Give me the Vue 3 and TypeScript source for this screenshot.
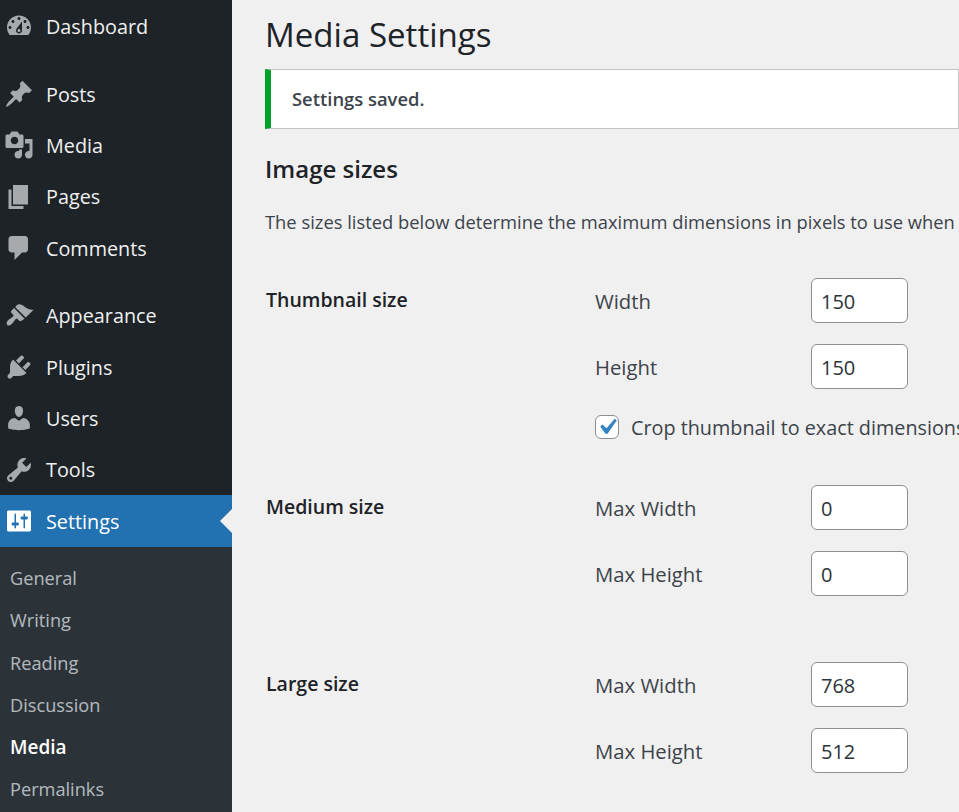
<script setup lang="ts">
interface MenuItem {
  label: string
  icon: string
  current?: boolean
}

const icons: Record<string, string> = {
  dashboard: 'M3.76 16h12.48c1.1-1.37 1.76-3.11 1.76-5 0-4.42-3.58-8-8-8s-8 3.58-8 8c0 1.89.66 3.63 1.76 5zM10 4c.55 0 1 .45 1 1s-.45 1-1 1-1-.45-1-1 .45-1 1-1zM6 6c.55 0 1 .45 1 1s-.45 1-1 1-1-.45-1-1 .45-1 1-1zm8 0c.55 0 1 .45 1 1s-.45 1-1 1-1-.45-1-1 .45-1 1-1zm-5.37 5.55L12 7v6c0 1.1-.9 2-2 2s-2-.9-2-2c0-.57.24-1.08.63-1.45zM4 10c.55 0 1 .45 1 1s-.45 1-1 1-1-.45-1-1 .45-1 1-1zm12 0c.55 0 1 .45 1 1s-.45 1-1 1-1-.45-1-1 .45-1 1-1zm-5 3c0-.55-.45-1-1-1s-1 .45-1 1 .45 1 1 1 1-.45 1-1z',
  posts: 'M10.44 3.02l1.82-1.82 6.36 6.35-1.83 1.82c-1.05-.68-2.48-.57-3.41.36l-.75.75c-.92.93-1.04 2.35-.35 3.41l-1.83 1.82-2.41-2.41-2.8 2.79c-.42.42-3.38 2.71-3.8 2.29s1.86-3.39 2.28-3.81l2.79-2.79L4.1 9.36l1.83-1.82c1.05.69 2.48.57 3.4-.36l.75-.75c.93-.92 1.05-2.35.36-3.41z',
  media: 'M13 11V4c0-.55-.45-1-1-1h-1.67L9 1H5L3.67 3H2c-.55 0-1 .45-1 1v7c0 .55.45 1 1 1h10c.55 0 1-.45 1-1zM7 4.5c1.38 0 2.5 1.12 2.5 2.5S8.38 9.5 7 9.5 4.5 8.38 4.5 7 5.62 4.5 7 4.5zM14 6h5v10.5c0 1.38-1.12 2.5-2.5 2.5S14 17.88 14 16.5s1.12-2.5 2.5-2.5c.17 0 .34.02.5.05V9h-3V6zm-4 8.05V13h2v3.5c0 1.38-1.12 2.5-2.5 2.5S7 17.88 7 16.5 8.12 14 9.5 14c.17 0 .34.02.5.05z',
  pages: 'M6 15V2h10v13H6zm-1 1h8v2H3V5h2v11z',
  comments: 'M5 2h9c1.1 0 2 .9 2 2v7c0 1.1-.9 2-2 2h-2l-5 5v-5H5c-1.1 0-2-.9-2-2V4c0-1.1.9-2 2-2z',
  appearance: 'M14.48 11.06L7.41 3.99l1.5-1.5c.5-.56 2.3-.47 3.51.32 1.21.8 1.43 1.28 2.91 2.1 1.18.64 2.45 1.26 4.45.85zm-.71.71L6.7 4.7 4.93 6.47c-.39.39-.39 1.02 0 1.41l1.06 1.06c.39.39.39 1.03 0 1.42-.6.6-1.43 1.11-2.21 1.69-.35.26-.7.53-1.01.84-.88.88-1.41 2.27-.63 3.05.78.78 2.17.25 3.05-.63.31-.31.58-.66.84-1.01.58-.78 1.09-1.61 1.69-2.21.39-.39 1.03-.39 1.42 0l1.06 1.06c.39.39 1.02.39 1.41 0z',
  plugins: 'M13.11 4.36L9.87 7.6 8 5.73l3.24-3.24c.35-.34 1.05-.2 1.56.32.52.51.66 1.21.31 1.55zm-8 1.77l.91-1.12 9.01 9.01-1.19.84c-.71.71-2.63 1.16-3.82 1.16H6.14L4.9 17.26c-.59.59-1.54.59-2.12 0-.59-.58-.59-1.53 0-2.12l1.24-1.24v-3.88c0-1.13.4-3.19 1.09-3.89zm7.26 3.97l3.24-3.24c.34-.35 1.04-.21 1.55.31.52.51.66 1.21.31 1.55l-3.24 3.25z',
  users: 'M10 9.25c-2.27 0-2.73-3.44-2.73-3.44C7 4.02 7.82 2 9.97 2c2.16 0 2.98 2.02 2.71 3.81 0 0-.41 3.44-2.68 3.44zm0 2.57L12.72 10c2.39 0 4.52 2.33 4.52 4.53v2.49s-3.65 1.13-7.24 1.13c-3.65 0-7.24-1.13-7.24-1.13v-2.49c0-2.25 1.94-4.48 4.47-4.48z',
  tools: 'M16.68 9.77c-1.34 1.34-3.3 1.67-4.95.99l-5.41 6.52c-.99.99-2.59.99-3.58 0s-.99-2.59 0-3.57l6.52-5.42c-.68-1.65-.35-3.61.99-4.95 1.28-1.28 3.12-1.62 4.72-1.06l-2.89 2.89 2.82 2.82 2.86-2.87c.53 1.58.18 3.39-1.08 4.65zM3.81 16.21c.4.39 1.04.39 1.43 0 .4-.4.4-1.04 0-1.43-.39-.4-1.03-.4-1.43 0-.39.39-.39 1.03 0 1.43z',
  settings: 'M18 16V4c0-.55-.45-1-1-1H3c-.55 0-1 .45-1 1v12c0 .55.45 1 1 1h14c.55 0 1-.45 1-1zM8 11h1c.55 0 1 .45 1 1s-.45 1-1 1H8v1.5c0 .28-.22.5-.5.5s-.5-.22-.5-.5V13H6c-.55 0-1-.45-1-1s.45-1 1-1h1V5.5c0-.28.22-.5.5-.5s.5.22.5.5V11zm5-2h-1c-.55 0-1-.45-1-1s.45-1 1-1h1V5.5c0-.28.22-.5.5-.5s.5.22.5.5V7h1c.55 0 1 .45 1 1s-.45 1-1 1h-1v5.5c0 .28-.22.5-.5.5s-.5-.22-.5-.5V9z'
}

const menuGroups: MenuItem[][] = [
  [{ label: 'Dashboard', icon: 'dashboard' }],
  [
    { label: 'Posts', icon: 'posts' },
    { label: 'Media', icon: 'media' },
    { label: 'Pages', icon: 'pages' },
    { label: 'Comments', icon: 'comments' }
  ],
  [
    { label: 'Appearance', icon: 'appearance' },
    { label: 'Plugins', icon: 'plugins' },
    { label: 'Users', icon: 'users' },
    { label: 'Tools', icon: 'tools' },
    { label: 'Settings', icon: 'settings', current: true }
  ]
]

const submenu = ['General', 'Writing', 'Reading', 'Discussion', 'Media', 'Permalinks']

const sizes = [
  {
    title: 'Thumbnail size',
    fields: [
      { label: 'Width', value: '150' },
      { label: 'Height', value: '150' }
    ],
    crop: true
  },
  {
    title: 'Medium size',
    fields: [
      { label: 'Max Width', value: '0' },
      { label: 'Max Height', value: '0' }
    ],
    crop: false
  },
  {
    title: 'Large size',
    fields: [
      { label: 'Max Width', value: '768' },
      { label: 'Max Height', value: '512' }
    ],
    crop: false
  }
]
</script>

<template>
  <div class="page">
    <aside class="sidebar">
      <ul v-for="(group, i) in menuGroups" :key="i" class="menu-group">
        <li v-for="item in group" :key="item.label" class="menu-item" :class="{ current: item.current }">
          <svg class="menu-icon" viewBox="0 0 20 20" aria-hidden="true">
            <path :d="icons[item.icon]" fill-rule="evenodd" />
          </svg>
          <span>{{ item.label }}</span>
        </li>
      </ul>
      <ul class="submenu">
        <li v-for="name in submenu" :key="name" :class="{ active: name === 'Media' }">{{ name }}</li>
      </ul>
    </aside>

    <main class="content">
      <h1>Media Settings</h1>
      <div class="notice"><strong>Settings saved.</strong></div>
      <h2>Image sizes</h2>
      <p class="intro">The sizes listed below determine the maximum dimensions in pixels to use when adding an image to the Media Library.</p>

      <section v-for="size in sizes" :key="size.title" class="size-row" :class="{ cropped: size.crop }">
        <h3>{{ size.title }}</h3>
        <div class="size-fields">
          <label v-for="field in size.fields" :key="field.label" class="field">
            <span>{{ field.label }}</span>
            <input type="text" :value="field.value" />
          </label>
          <label v-if="size.crop" class="crop">
            <span class="checkbox">
              <svg viewBox="0 0 20 20" aria-hidden="true">
                <path d="M14.83 4.89l1.34.94-5.81 8.38H9.02L5.78 9.67l1.34-1.25 2.57 2.4z" />
              </svg>
            </span>
            <span class="crop-text">Crop thumbnail to exact dimensions (normally thumbnails are proportional)</span>
          </label>
        </div>
      </section>
    </main>
  </div>
</template>

<style>
html,
body {
  margin: 0;
  overflow: hidden;
  background: #f0f0f1;
}
</style>

<style scoped>
.page {
  display: flex;
  height: 812px;
  overflow: hidden;
  font-family: "Open Sans", "Liberation Sans", sans-serif;
  color: #3c434a;
}

.sidebar {
  flex: none;
  width: 232px;
  height: 812px;
  overflow: hidden;
  background: #1d2327;
  padding-top: 0.7px;
  box-sizing: border-box;
}

ul {
  list-style: none;
  margin: 0;
  padding: 0;
}

.menu-group {
  margin-bottom: 16.5px;
}

.menu-group:nth-of-type(3) {
  margin-bottom: 0;
}

.menu-item {
  position: relative;
  display: flex;
  align-items: center;
  height: 51.3px;
  padding-left: 4px;
  font-size: 19.8px;
  color: #f0f0f1;
}

.menu-icon {
  flex: none;
  width: 30px;
  height: 30px;
  margin-right: 12px;
  fill: #a7aaad;
}

.menu-item.current {
  background: #2271b1;
  color: #fff;
}

.menu-item.current .menu-icon {
  fill: #fff;
}

.menu-item.current::after {
  content: "";
  position: absolute;
  right: 0;
  top: 50%;
  margin-top: -12px;
  border: 12px solid transparent;
  border-right-color: #f0f0f1;
}

.submenu {
  background: #2c3338;
  padding-top: 10.6px;
  height: 300px;
}

.submenu li {
  height: 42.2px;
  line-height: 42.2px;
  padding-left: 10px;
  font-size: 18.2px;
  color: rgba(240, 246, 252, 0.7);
}

.submenu li.active {
  color: #fff;
  font-size: 19px;
  font-weight: 600;
}

.content {
  flex: 1;
  min-width: 0;
  padding-left: 33px;
  overflow: hidden;
}

h1 {
  margin: 0;
  padding-top: 11px;
  height: 69px;
  box-sizing: border-box;
  font-size: 33.1px;
  line-height: 47px;
  font-weight: 400;
  color: #1d2327;
}

.notice {
  display: flex;
  align-items: center;
  height: 60px;
  box-sizing: border-box;
  background: #fff;
  border: 1px solid #c3c4c7;
  border-left: 6px solid #00a32a;
  padding: 0 0 2px 21px;
  font-size: 18.4px;
}

.notice strong {
  font-weight: 600;
}

h2 {
  margin: 22px 0 0;
  font-size: 24px;
  line-height: 36px;
  font-weight: 600;
  color: #1d2327;
}

.intro {
  margin: 20px 0 0;
  font-size: 18.35px;
  line-height: 30px;
  white-space: nowrap;
}

.size-row {
  display: flex;
  margin-top: 66px;
}

.size-row.cropped {
  margin-top: 41px;
}

.size-row.cropped + .size-row {
  margin-top: 44px;
}

h3 {
  flex: none;
  width: 330px;
  margin: 0;
  padding: 7px 0 0 1px;
  box-sizing: border-box;
  font-size: 19.5px;
  line-height: 30px;
  font-weight: 600;
  color: #1d2327;
}

.size-fields {
  display: flex;
  flex-direction: column;
  gap: 21px;
  min-width: 0;
}

.field {
  display: flex;
  align-items: center;
  font-size: 20.3px;
}

.field span {
  width: 216px;
  padding-top: 1px;
}

.field input {
  width: 97px;
  height: 45px;
  box-sizing: border-box;
  border: 1px solid #8c8f94;
  border-radius: 6px;
  background: #fff;
  padding: 2px 9px 0;
  font: inherit;
  font-size: 20px;
  color: #2c3338;
  outline: none;
}

.crop {
  display: flex;
  align-items: center;
  gap: 12px;
  margin-top: 3px;
  font-size: 19.8px;
  white-space: nowrap;
}

.crop-text {
  padding-top: 1px;
}

.checkbox {
  flex: none;
  width: 24px;
  height: 24px;
  box-sizing: border-box;
  border: 1px solid #8c8f94;
  border-radius: 6px;
  background: #fff;
}

.checkbox svg {
  display: block;
  width: 32px;
  height: 32px;
  margin: -5px;
  fill: #3582c4;
}
</style>
